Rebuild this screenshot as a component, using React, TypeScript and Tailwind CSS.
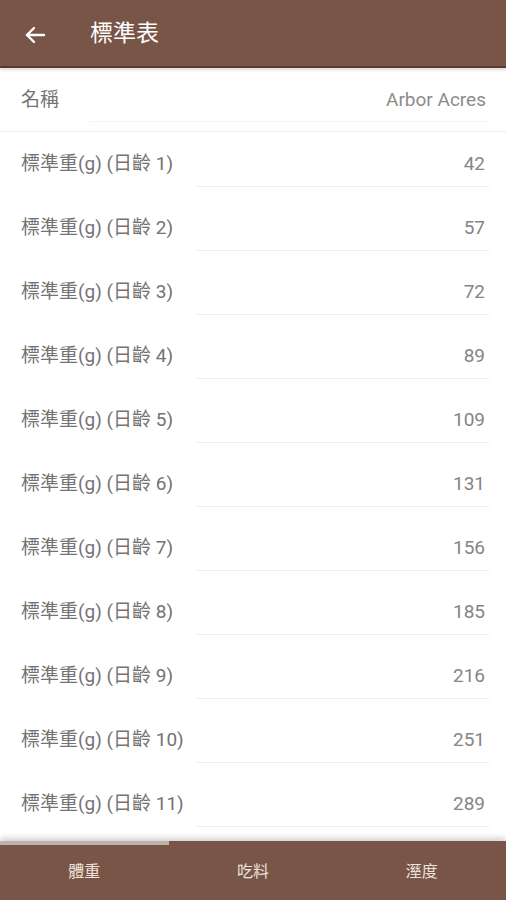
import { useState } from "react";

const weights = [42, 57, 72, 89, 109, 131, 156, 185, 216, 251, 289];
const tabs = ["體重", "吃料", "溼度"];

export default function App() {
  const [activeTab, setActiveTab] = useState(0);

  return (
    <div
      className="relative flex h-[900px] w-[506px] flex-col overflow-hidden bg-white"
      style={{ fontFamily: 'Roboto, "Noto Sans CJK TC", sans-serif' }}
    >
      {/* Header */}
      <header className="flex h-[68px] shrink-0 items-center border-b-2 border-[#5a3a2c] bg-[#795548] pt-[3px] shadow-[0_2px_3px_rgba(0,0,0,0.15)]">
        <button className="ml-[23px] flex h-6 w-6 items-center justify-center text-white">
          <svg width="24" height="24" viewBox="0 0 24 24" fill="none" stroke="currentColor" strokeWidth="2.4" strokeLinecap="round" strokeLinejoin="round">
            <path d="M21 12H4" />
            <path d="M11 5l-7 7 7 7" />
          </svg>
        </button>
        <h1 className="ml-[43px] text-[23px] text-white">標準表</h1>
      </header>

      {/* Table */}
      <div className="flex-1 overflow-hidden">
        <div className="relative flex h-[64px] items-center justify-between border-b border-[#ececec] px-[20px] pt-[2px] text-[19px] text-[#747474]">
          <span className="ml-px">名稱</span>
          <span className="text-[#8c8c8c]">Arbor Acres</span>
          <div className="absolute bottom-[9px] left-[90px] right-[16px] h-px bg-[#f3f3f3]" />
        </div>
        {weights.map((w, i) => (
          <div key={i} className="relative flex h-[64px] items-center justify-between px-[20px] pt-[1px] text-[19px] text-[#737373]">
            <span className="ml-px">標準重(g) (日齡 {i + 1})</span>
            <span className="pr-px text-[#858585]">{w}</span>
            <div className="absolute bottom-[9px] left-[196px] right-[16px] h-px bg-[#f0f0f0]" />
          </div>
        ))}
      </div>

      {/* Bottom tabs */}
      <nav className="absolute bottom-0 left-0 right-0 flex h-[59px] bg-[#795548] shadow-[0_-3px_6px_rgba(0,0,0,0.18)]">
        {tabs.map((t, i) => (
          <button
            key={t}
            onClick={() => setActiveTab(i)}
            className="relative flex flex-1 items-center justify-center pt-[3px] text-[16px] text-[#eee3dc]"
          >
            {activeTab === i && <span className="absolute left-0 right-0 top-0 h-[4px] bg-[#bdb2ab]" />}
            {t}
          </button>
        ))}
      </nav>
    </div>
  );
}
